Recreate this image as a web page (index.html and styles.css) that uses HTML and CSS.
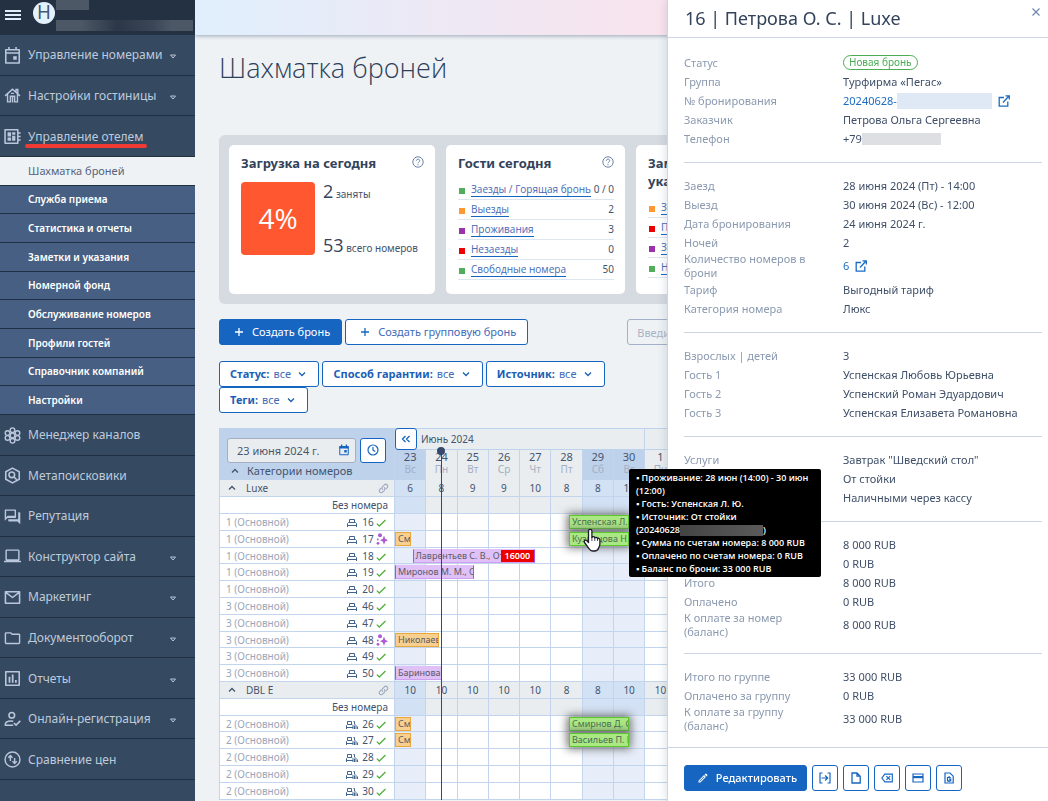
FILE: index.html
```html
<!DOCTYPE html>
<html lang="ru">
<head>
<meta charset="utf-8">
<title>Шахматка броней</title>
<link rel="stylesheet" href="styles.css">
</head>
<body>
<svg class="sprite" aria-hidden="true">
  <symbol id="i-calendar" viewBox="0 0 24 24"><path fill="none" stroke="currentColor" stroke-width="2" d="M3.500 5h17v16.500h-17z"/><path d="M3 4h18v5H3zM6 1h2.500v4H6zM15.500 1H18v4h-2.500zM12.500 12h5v5h-5z"/></symbol>
  <symbol id="i-cal-nav" viewBox="0 0 24 24"><path fill="none" stroke="currentColor" stroke-width="2.200" stroke-linejoin="round" d="M2.500 4h19v18.500h-19zM2.500 8.500h19M7 0v4M17 0v4"/><path d="M13 13h5v5h-5z"/></symbol>
  <symbol id="i-home" viewBox="0 0 24 24"><path fill="none" stroke="currentColor" stroke-width="2" d="M1.500 12.500 12 3l10.500 9.500M5 10v11h4v-8h6v8h4V10M17 7V3.500h2.500V9M12 14v8M10 9h4"/></symbol>
  <symbol id="i-board" viewBox="0 0 24 24"><path fill="none" stroke="currentColor" stroke-width="2.200" stroke-linejoin="round" d="M1.500 2.500h18v19h-18zM20 7h3.500M20 12h3.500M20 17h3.500"/><path d="M5 6h5v6H5zM11.500 6H16v3.500h-4.500zM5 13.500h5V18H5zM11.500 11H16v7h-4.500z"/></symbol>
  <symbol id="i-hive" viewBox="0 0 24 24"><g fill="none" stroke="currentColor" stroke-width="2"><circle cx="12" cy="12" r="3.300"/><circle cx="12" cy="4.500" r="3.300"/><circle cx="12" cy="19.500" r="3.300"/><circle cx="5" cy="8.500" r="3.300"/><circle cx="5" cy="15.500" r="3.300"/><circle cx="19" cy="8.500" r="3.300"/><circle cx="19" cy="15.500" r="3.300"/></g></symbol>
  <symbol id="i-hex" viewBox="0 0 24 24"><g fill="none" stroke="currentColor" stroke-width="2.200"><path d="m12 1.500 9.500 5.300v10.400L12 22.500l-9.500-5.300V6.800z"/><circle cx="11" cy="11" r="4"/><path d="m14 14 4 4"/></g></symbol>
  <symbol id="i-chat" viewBox="0 0 24 24"><path d="M15 4v7H5.170L3 13.170V4zm1-2H2a1 1 0 0 0-1 1v15l4-4h11a1 1 0 0 0 1-1V3a1 1 0 0 0-1-1zm6 4h-2v10H6v2a1 1 0 0 0 1 1h12l4 4V7a1 1 0 0 0-1-1z"/></symbol>
  <symbol id="i-laptop" viewBox="0 0 24 24"><path d="M21 18a2 2 0 0 0 1-2V4a2 2 0 0 0-2-2H4a2 2 0 0 0-2 2v12a2 2 0 0 0 1 2H0v2h24v-2zM4 4h16v12H4z"/></symbol>
  <symbol id="i-mail" viewBox="0 0 24 24"><path fill="none" stroke="currentColor" stroke-width="2.200" stroke-linejoin="round" d="M2 4h20v16H2zM2 4.500l10 7.500 10-7.500"/></symbol>
  <symbol id="i-folder" viewBox="0 0 24 24"><path d="m9.170 5 2 2H21v11H3V5zM10 3H3a2 2 0 0 0-2 2v13a2 2 0 0 0 2 2h18a2 2 0 0 0 2-2V7a2 2 0 0 0-2-2h-9z"/></symbol>
  <symbol id="i-chart" viewBox="0 0 24 24"><path fill="none" stroke="currentColor" stroke-width="2.200" stroke-linejoin="round" d="M2.500 2.500h19v19h-19z"/><path d="M6.500 9.500H9V18H6.500zM11 6.500h2.500V18H11zM15.500 14H18v4h-2.500z"/></symbol>
  <symbol id="i-userok" viewBox="0 0 24 24"><path fill="none" stroke="currentColor" stroke-width="2.200" d="M11 2a4 4 0 1 1 0 8 4 4 0 0 1 0-8zM13 20H2v-2.500c1-3 7-4 11-3M14 17l3 3 6-6"/></symbol>
  <symbol id="i-swap" viewBox="0 0 24 24"><g fill="none" stroke="currentColor" stroke-width="2"><circle cx="12" cy="12" r="10.500"/><path d="M9 14V6M6 9.500l3-3 3 3M15 10v8M12 14.500l3 3 3-3"/></g></symbol>
  <symbol id="i-caret" viewBox="0 0 8 6"><path fill="none" stroke="currentColor" d="M1.500 1h5L4 4z"/></symbol>
  <symbol id="i-help" viewBox="0 0 12 12"><g fill="none" stroke="currentColor"><circle cx="6" cy="6" r="5.200"/><path d="M4.300 4.800c0-2.300 3.500-2.100 3.400 0C7.700 6 6 6 6 7.300M6 8.200v1.100"/></g></symbol>
  <symbol id="i-plus" viewBox="0 0 10 10"><path fill="none" stroke="currentColor" stroke-width="1.300" d="M5 1v8M1 5h8"/></symbol>
  <symbol id="i-down" viewBox="0 0 8 6"><path fill="none" stroke="currentColor" stroke-width="1.300" d="m1 1.500 3 3 3-3"/></symbol>
  <symbol id="i-up" viewBox="0 0 8 6"><path fill="none" stroke="currentColor" stroke-width="1.300" d="m1 4.500 3-3 3 3"/></symbol>
  <symbol id="i-clock" viewBox="0 0 12 12"><g fill="none" stroke="currentColor" stroke-width="1.200"><circle cx="6" cy="6" r="5"/><path d="M6 3v3.200L8.300 7.500"/></g></symbol>
  <symbol id="i-dleft" viewBox="0 0 10 8"><path fill="none" stroke="currentColor" stroke-width="1.300" d="M4.500 1l-3 3 3 3M8.500 1l-3 3 3 3"/></symbol>
  <symbol id="i-link" viewBox="0 0 12 12"><g fill="none" stroke="currentColor" stroke-width="1.200" stroke-linecap="round"><path d="M5 7a2.200 2.200 0 0 1 0-3l2-2a2.100 2.100 0 0 1 3 3L8.700 6.300"/><path d="M7 5a2.200 2.200 0 0 1 0 3l-2 2a2.100 2.100 0 0 1-3-3l1.300-1.300"/></g></symbol>
  <symbol id="i-bed1" viewBox="0 0 12 9"><path fill="none" stroke="currentColor" d="M3.500 4V1.500h5V4M1.500 9V5.500l1-1h7l1 1V9M1.500 7.500h9"/></symbol>
  <symbol id="i-bed2" viewBox="0 0 12 9"><path fill="none" stroke="currentColor" d="M1.500 4V1.500h4V4M.5 9V5.500l1-1h4.500l1 1V9M.5 7.500H7M7.500 1.500h1V4l1.500 1.500V9M8.500 5.500V9M11.500 6.500V9"/></symbol>
  <symbol id="i-check" viewBox="0 0 10 8"><path fill="none" stroke="currentColor" stroke-width="1.300" d="m.8 4.600 2.500 2.400L9.500 1"/></symbol>
  <symbol id="i-clean" viewBox="0 0 12 12"><circle cx="4" cy="2.200" r="2"/><circle cx="1.800" cy="6.500" r=".9"/><circle cx="2" cy="10.300" r="1.400"/><path d="M8 2.500 9.200 5.800l2.800 1.400-2.800 1.400L8 11.800 6.800 8.600 4 7.200l2.800-1.400z"/></symbol>
  <symbol id="i-ext" viewBox="0 0 12 12"><path fill="none" stroke="currentColor" stroke-width="1.300" d="M6 2.500H1.200v8.700h8.600V6.500M7.500.8h3.800v3.800M11 1 5 7.500"/></symbol>
  <symbol id="i-close" viewBox="0 0 10 10"><path fill="none" stroke="currentColor" stroke-width="1.200" d="m1.500 1.500 7 7M8.500 1.500l-7 7"/></symbol>
  <symbol id="i-pen" viewBox="0 0 24 24"><path d="m14.060 9.020.92.920L5.920 19H5v-.92zM17.660 3a1 1 0 0 0-.7.290l-1.830 1.830 3.750 3.750 1.830-1.830a1 1 0 0 0 0-1.410L18.370 3.290a1 1 0 0 0-.71-.29zm-3.600 3.190L3 17.250V21h3.750L17.810 9.940z"/></symbol>
  <symbol id="i-checkin" viewBox="0 0 12 12"><path fill="none" stroke="currentColor" stroke-width="1.200" d="M3.500 1H1v10h2.500M8.500 1H11v10H8.500M2.500 6h6M6.200 3.500 8.700 6 6.200 8.500"/></symbol>
  <symbol id="i-doc" viewBox="0 0 12 12"><path fill="none" stroke="currentColor" stroke-width="1.300" d="M2 1h5l3.200 3.200V11H2zM7 1v3.200h3.200"/></symbol>
  <symbol id="i-erase" viewBox="0 0 14 12"><path fill="none" stroke="currentColor" stroke-width="1.300" d="M4.500 1.500h8.700v9H4.500L1 6zM6.300 3.700l4.400 4.600M10.700 3.700 6.300 8.300"/></symbol>
  <symbol id="i-card" viewBox="0 0 12 12"><path fill="none" stroke="currentColor" stroke-width="1.200" d="M1 2h10v8H1z"/><path d="M1 4h10v2.200H1z"/></symbol>
  <symbol id="i-docmoney" viewBox="0 0 12 12"><path fill="none" stroke="currentColor" stroke-width="1.200" d="M2 1h5l3.200 3.200V11H2zM7.800 5.500H4.500v3.300h3.200V7.200H6M6.100 4v1M6.100 9v1"/></symbol>
</svg>

<div class="app">
  <nav class="side">
    <div class="side-head">
      <button class="burger" aria-label="Меню"></button>
      <span class="logo">H</span>
      <span class="masks"><i class="mask-a"></i><i class="mask-b"></i></span>
    </div>
    <div class="nav-top">
      <a href="#" class="nav"><svg><use href="#i-cal-nav"/></svg><span>Управление номерами</span><svg class="caret"><use href="#i-caret"/></svg></a>
      <a href="#" class="nav"><svg><use href="#i-home"/></svg><span>Настройки гостиницы</span><svg class="caret"><use href="#i-caret"/></svg></a>
      <a href="#" class="nav"><svg><use href="#i-board"/></svg><span class="marked">Управление отелем</span></a>
    </div>
    <div class="nav-sub">
      <a href="#" class="sub current">Шахматка броней</a>
      <a href="#" class="sub">Служба приема</a>
      <a href="#" class="sub">Статистика и отчеты</a>
      <a href="#" class="sub">Заметки и указания</a>
      <a href="#" class="sub">Номерной фонд</a>
      <a href="#" class="sub">Обслуживание номеров</a>
      <a href="#" class="sub">Профили гостей</a>
      <a href="#" class="sub">Справочник компаний</a>
      <a href="#" class="sub">Настройки</a>
    </div>
    <div class="nav-rest">
      <a href="#" class="nav"><svg><use href="#i-hive"/></svg><span>Менеджер каналов</span></a>
      <a href="#" class="nav"><svg><use href="#i-hex"/></svg><span>Метапоисковики</span></a>
      <a href="#" class="nav"><svg><use href="#i-chat"/></svg><span>Репутация</span></a>
      <a href="#" class="nav"><svg><use href="#i-laptop"/></svg><span>Конструктор сайта</span><svg class="caret"><use href="#i-caret"/></svg></a>
      <a href="#" class="nav"><svg><use href="#i-mail"/></svg><span>Маркетинг</span><svg class="caret"><use href="#i-caret"/></svg></a>
      <a href="#" class="nav"><svg><use href="#i-folder"/></svg><span>Документооборот</span><svg class="caret"><use href="#i-caret"/></svg></a>
      <a href="#" class="nav"><svg><use href="#i-chart"/></svg><span>Отчеты</span><svg class="caret"><use href="#i-caret"/></svg></a>
      <a href="#" class="nav"><svg><use href="#i-userok"/></svg><span>Онлайн-регистрация</span><svg class="caret"><use href="#i-caret"/></svg></a>
      <a href="#" class="nav"><svg><use href="#i-swap"/></svg><span>Сравнение цен</span></a>
    </div>
  </nav>

  <main class="main">
    <div class="topbar"></div>
    <div class="content">
      <h1>Шахматка броней</h1>
      <section class="stats">
        <article class="card load">
          <header><h2>Загрузка на сегодня</h2><svg class="help"><use href="#i-help"/></svg></header>
          <div class="load-body">
            <div class="percent">4%</div>
            <div class="load-nums">
              <p><b>2</b> заняты</p>
              <p><b>53</b> всего номеров</p>
            </div>
          </div>
        </article>
        <article class="card guests">
          <header><h2>Гости сегодня</h2><svg class="help"><use href="#i-help"/></svg></header>
          <ul>
            <li><i class="green"></i><a href="#">Заезды / Горящая бронь</a><span>0 / 0</span></li>
            <li><i class="orange"></i><a href="#">Выезды</a><span>2</span></li>
            <li><i class="purple"></i><a href="#">Проживания</a><span>3</span></li>
            <li><i class="red"></i><a href="#">Незаезды</a><span>0</span></li>
            <li><i class="green"></i><a href="#">Свободные номера</a><span>50</span></li>
          </ul>
        </article>
        <article class="card notes">
          <header><h2>Заметки и указания</h2></header>
          <ul>
            <li><i class="orange"></i><a href="#">Заезды</a></li>
            <li><i class="red"></i><a href="#">Проживания</a></li>
            <li><i class="purple"></i><a href="#">Задачи</a></li>
            <li><i class="green"></i><a href="#">Номера</a></li>
          </ul>
        </article>
      </section>

      <div class="actions">
        <button class="btn primary"><svg><use href="#i-plus"/></svg>Создать бронь</button>
        <button class="btn"><svg><use href="#i-plus"/></svg>Создать групповую бронь</button>
        <input class="search" type="text" placeholder="Введите имя гостя" aria-label="Поиск брони">
      </div>
      <div class="filters">
        <label class="filter"><b>Статус:</b><select><option>все</option></select><svg><use href="#i-down"/></svg></label>
        <label class="filter"><b>Способ гарантии:</b><select><option>все</option></select><svg><use href="#i-down"/></svg></label>
        <label class="filter"><b>Источник:</b><select><option>все</option></select><svg><use href="#i-down"/></svg></label>
        <label class="filter"><b>Теги:</b><select><option>все</option></select><svg><use href="#i-down"/></svg></label>
      </div>

      <div class="board">
        <table class="grid">
          <colgroup><col class="c-room"></colgroup>
          <thead>
            <tr class="r-month">
              <th rowspan="2" class="corner">
                <div class="corner-box">
                  <div class="picker">
                    <label class="date"><input type="text" value="23 июня 2024 г." aria-label="Дата"><svg><use href="#i-calendar"/></svg></label>
                    <button class="now" aria-label="Сегодня"><svg><use href="#i-clock"/></svg></button>
                  </div>
                  <div class="cats"><svg><use href="#i-up"/></svg>Категории номеров</div>
                </div>
              </th>
              <th colspan="8" class="month"><div><button class="back" aria-label="Назад"><svg><use href="#i-dleft"/></svg></button>Июнь 2024</div></th>
              <th colspan="13"></th>
            </tr>
            <tr class="r-days"></tr>
          </thead>
          <tbody></tbody>
        </table>
        <div class="today"></div>
      </div>
    </div>
  </main>
</div>

<aside class="drawer">
  <header class="d-head">
    <h2>16 | Петрова О. С. | Luxe</h2>
    <button class="close" aria-label="Закрыть"><svg><use href="#i-close"/></svg></button>
  </header>
  <div class="d-body">
    <dl>
      <div><dt>Статус</dt><dd><span class="pill">Новая бронь</span></dd></div>
      <div><dt>Группа</dt><dd>Турфирма «Пегас»</dd></div>
      <div><dt>№ бронирования</dt><dd><a href="#">20240628-</a><i class="hide-blue"></i><svg class="ext"><use href="#i-ext"/></svg></dd></div>
      <div><dt>Заказчик</dt><dd>Петрова Ольга Сергеевна</dd></div>
      <div><dt>Телефон</dt><dd>+79<i class="hide-grey"></i></dd></div>
    </dl>
    <dl>
      <div><dt>Заезд</dt><dd>28 июня 2024 (Пт) - 14:00</dd></div>
      <div><dt>Выезд</dt><dd>30 июня 2024 (Вс) - 12:00</dd></div>
      <div><dt>Дата бронирования</dt><dd>24 июня 2024 г.</dd></div>
      <div><dt>Ночей</dt><dd>2</dd></div>
      <div><dt>Количество номеров в брони</dt><dd><a href="#">6</a><svg class="ext"><use href="#i-ext"/></svg></dd></div>
      <div><dt>Тариф</dt><dd>Выгодный тариф</dd></div>
      <div><dt>Категория номера</dt><dd>Люкс</dd></div>
    </dl>
    <dl>
      <div><dt>Взрослых | детей</dt><dd>3</dd></div>
      <div><dt>Гость 1</dt><dd>Успенская Любовь Юрьевна</dd></div>
      <div><dt>Гость 2</dt><dd>Успенский Роман Эдуардович</dd></div>
      <div><dt>Гость 3</dt><dd>Успенская Елизавета Романовна</dd></div>
    </dl>
    <dl>
      <div><dt>Услуги</dt><dd>Завтрак "Шведский стол"</dd></div>
      <div><dt></dt><dd>От стойки</dd></div>
      <div><dt></dt><dd>Наличными через кассу</dd></div>
    </dl>
    <dl>
      <div><dt></dt><dd>8 000 RUB</dd></div>
      <div><dt></dt><dd>0 RUB</dd></div>
      <div><dt>Итого</dt><dd>8 000 RUB</dd></div>
      <div><dt>Оплачено</dt><dd>0 RUB</dd></div>
      <div><dt>К оплате за номер (баланс)</dt><dd>8 000 RUB</dd></div>
    </dl>
    <dl>
      <div><dt>Итого по группе</dt><dd>33 000 RUB</dd></div>
      <div><dt>Оплачено за группу</dt><dd>0 RUB</dd></div>
      <div><dt>К оплате за группу (баланс)</dt><dd>33 000 RUB</dd></div>
    </dl>
  </div>
  <footer class="d-foot">
    <button class="btn primary edit"><svg><use href="#i-pen"/></svg>Редактировать</button>
    <button class="sq" aria-label="Заселить"><svg><use href="#i-checkin"/></svg></button>
    <button class="sq" aria-label="Документ"><svg><use href="#i-doc"/></svg></button>
    <button class="sq" aria-label="Отменить"><svg><use href="#i-erase"/></svg></button>
    <button class="sq" aria-label="Оплата"><svg><use href="#i-card"/></svg></button>
    <button class="sq" aria-label="Счет"><svg><use href="#i-docmoney"/></svg></button>
  </footer>
</aside>

<div class="tip" role="tooltip">▪ Проживание: 28 июн (14:00) - 30 июн (12:00)<br>▪ Гость: Успенская Л. Ю.<br>▪ Источник: От стойки<br>(20240628<i></i>)<br>▪ Сумма по счетам номера: 8 000 RUB<br>▪ Оплачено по счетам номера: 0 RUB<br>▪ Баланс по брони: 33 000 RUB</div>
<svg class="hand" viewBox="0 0 18 24"><path fill="#fff" stroke="#1c1c28" stroke-width="1.300" stroke-linejoin="round" d="M5.500 14.500V3a1.700 1.700 0 0 1 3.400 0v6.500c.5-1.300 2.700-1 2.900.4.700-1 2.500-.6 2.700.7.900-.5 2.400-.1 2.400 1.400V16c0 2-1 3.200-1.400 4.300-.6 1.800-2.200 2.700-4 2.700H9.800c-1.800 0-2.800-.8-3.600-2.200L1.500 14.500c-1-1.900 1.200-3.200 2.500-1.700z"/><path stroke="#1c1c28" stroke-width=".8" d="M8.900 9.500V13M11.800 10v3M14.500 10.700V13"/></svg>
<script src="script.js"></script>
</body>
</html>
```

FILE: styles.css
```css
* { box-sizing: border-box; }
body { margin: 0; background: #eef2f5; color: #44546c; font: 11px/14px "Noto Sans", "Open Sans", sans-serif; overflow-x: hidden; }
h1, h2, p, ul, dl, dd { margin: 0; padding: 0; font-weight: 400; }
ul { list-style: none; }
a { text-decoration: none; color: #1b6cc4; }
button, input, select { font: inherit; color: inherit; margin: 0; }
button { cursor: pointer; padding: 0; }
svg { fill: currentColor; flex: none; }
.sprite { display: none; }
.app { display: flex; min-height: 100vh; }

/* sidebar */
.side { flex: 0 0 195px; min-width: 0; background: #354961; }
.side-head { display: flex; height: 35px; background: #243142; padding-left: 5px; align-items: flex-start; }
.burger { width: 16px; height: 11px; margin-top: 10px; background: linear-gradient(#dfeefb 2px, transparent 2px 4px, #dfeefb 4px 6px, transparent 6px 8px, #dfeefb 8px 10px, transparent 10px); border: 0; }
.logo { width: 22px; height: 22px; margin: 2px 1px 0 12px; border-radius: 50%; background: #e3f1fd; color: #46566c; font: 18px/22px Inter, sans-serif; text-align: center; }
.masks { flex: 1; display: flex; flex-direction: column; gap: 10px; padding-right: 2px; }
.mask-a { width: 33px; height: 10px; background: #4d5866; }
.mask-b { height: 11px; background: linear-gradient(90deg, #4d5866 0 18%, #2c3848 45%, #3a4656 70%, #4d5866 85%); }
.nav-top, .nav-sub, .nav-rest { display: grid; grid-auto-rows: 1fr; }
.nav-top { height: 122px; }
.nav-sub { height: 258px; background: #475f82; }
.nav-rest { height: 365px; }
.nav { display: flex; align-items: center; gap: 7px; min-width: 0; padding: 1px 18px 0 4px; border-bottom: 1px solid #212f42; color: #bfcbdc; font: 12px/18px "Noto Sans", "Open Sans", sans-serif; }
.nav span { flex: 1; white-space: nowrap; }
.nav svg { width: 17px; height: 17px; color: #b9c6db; }
.nav .caret { width: 8px; height: 6px; margin-top: 4px; }
.marked { position: relative; }
.marked::after { content: ""; position: absolute; left: -3px; top: 16px; width: 122px; height: 4px; border-radius: 2px; background: #f23a35; }
.sub { display: flex; align-items: center; padding-left: 28px; border-bottom: 1px solid #212f42; color: #fff; font: 600 10px/14px "Noto Sans", sans-serif; }
.sub.current { background: #eef2f5; color: #56647a; font-weight: 400; font-size: 11px; }

/* page */
.main { flex: 1; min-width: 0; overflow: hidden; }
.topbar { height: 35px; background: linear-gradient(90deg, #e0effd, #fbe2ec 60%, #fbe2ec); box-shadow: 0 1px 4px #9aa5b4; }
.content { padding-left: 24px; }
h1 { font: 300 27px/36px "Open Sans", sans-serif; color: #2f405a; margin: 15px 0 49px; }
.stats { display: flex; gap: 11px; padding: 10px; border-radius: 6px 0 0 6px; background: #d6dae1; }
.card { background: #fff; border-radius: 5px; min-height: 149px; padding: 9px 11px 9px 12px; flex: none; }
.card header { display: flex; justify-content: space-between; }
.card h2 { font: 700 13px/18px "Noto Sans", sans-serif; color: #33435b; }
.help { width: 12px; height: 12px; margin-top: 2px; color: #6d84aa; }
.load { width: 206px; }
.guests { width: 179px; }
.notes { width: 179px; }
.notes h2 { max-width: 90px; }
.load-body { display: flex; gap: 8px; margin-top: 10px; }
.percent { flex: none; width: 74px; height: 73px; border-radius: 4px; background: #ff5830; color: #fff; font: 28px/73px "Open Sans", sans-serif; text-align: center; }
.load-nums { display: flex; flex-direction: column; justify-content: space-between; white-space: nowrap; font-size: 10px; }
.load-nums b { font: 400 18px/18px "Open Sans", sans-serif; color: #33435b; }
.card ul { margin-top: 8px; }
.card li { display: flex; align-items: center; height: 20px; border-bottom: 1px solid #dde6ef; font-size: 10px; line-height: 13px; white-space: nowrap; }
.card li i { width: 6px; height: 6px; margin: 2px 6px 0 1px; }
.card li a { color: #4468b6; border-bottom: 1px solid #1665c1; font-family: "Open Sans", sans-serif; }
.card li span { margin-left: auto; }
.green { background: #52ae5b; } .orange { background: #ff9830; } .purple { background: #9c31ad; } .red { background: #ec0000; }
.actions { display: flex; gap: 3px; margin-top: 15px; }
.btn { display: flex; align-items: center; justify-content: center; height: 26px; padding: 0 11px 0 14px; gap: 8px; border: 1px solid #1665c1; border-radius: 3px; background: #fff; color: #3f6bb8; font: 11px/16px "Noto Sans", sans-serif; white-space: nowrap; }
.btn svg { width: 10px; height: 10px; color: #1665c1; }
.btn.primary { background: #1665c1; color: #fff; }
.btn.primary svg { color: #fff; }
.search { width: 200px; height: 26px; margin-left: 96px; padding: 0 9px; border: 1px solid #a3b1c7; border-radius: 3px; background: transparent; }
.search::placeholder { color: #a9b4c4; }
.filters { display: flex; flex-wrap: wrap; gap: 0 3px; max-width: 400px; margin-top: 16px; }
.filter { display: flex; align-items: center; height: 26px; padding: 0 12px 0 10px; border: 1px solid #1665c1; border-radius: 3px; background: #fff; color: #1c5fb4; font: 11px/16px "Noto Sans", sans-serif; }
.filter select { appearance: none; border: 0; background: none; padding: 0 7px 0 4px; color: #3f6bb8; }
.filter svg { width: 8px; height: 6px; }

/* booking board */
.board { position: relative; margin: 15px -4px 0 0; }
.grid { width: 100%; table-layout: fixed; border-collapse: separate; border-spacing: 0; }
.c-room { width: 176px; }
.grid th, .grid td { padding: 0; font-weight: 400; text-align: center; border-right: 1px solid #c3d5ec; border-bottom: 1px solid #c3d5ec; background: #fff; position: relative; line-height: 15px; }
.grid thead th { background: #e9edf0; border-top: 1px solid #bdd2ec; border-bottom: 0; }
.r-month { height: 21px; }
.r-days { height: 31px; }
.grid .r-days th { line-height: 13px; vertical-align: top; }
.grid .r-days small { display: block; font-size: 10px; color: #a3b0c3; }
.grid thead th.corner, .grid thead th.off { background: #bed2ec; }
.corner-box { display: flex; flex-direction: column; padding: 7px 8px 0; text-align: left; }
.picker { display: flex; gap: 4px; }
.date { flex: 1; min-width: 0; display: flex; align-items: center; height: 25px; padding: 0 5px 0 9px; border: 1px solid #a5aec2; border-radius: 3px; background: #e9edf0; color: #1665c1; }
.date input { flex: 1; min-width: 0; width: 80px; border: 0; padding: 0; background: none; font-size: 11px; color: #4b586c; outline: 0; }
.date svg { width: 12px; height: 12px; }
.now, .back, .sq { display: flex; flex: none; align-items: center; justify-content: center; width: 26px; height: 26px; border: 1px solid #1665c1; border-radius: 3px; background: #fff; color: #1665c1; }
.now { height: 25px; }
.now svg { width: 12px; height: 12px; }
.cats { display: flex; align-items: center; gap: 8px; padding-left: 4px; font-size: 11px; line-height: 16px; color: #44546c; }
.cats svg, .cat svg:first-child { width: 8px; height: 6px; }
.month div { display: flex; align-items: center; gap: 4px; height: 20px; font-size: 10px; }
.back { width: 22px; height: 22px; position: relative; z-index: 3; }
.back svg { width: 10px; height: 8px; }
tbody tr { height: 17px; }
tbody tr:nth-child(5n) { height: 16px; }
.grid tbody td { font-size: 10px; }
.grid tbody tr:nth-child(5n) > * { line-height: 14px; }
.grid tbody td.off { background: #e7eef9; }
.grid .sum td, .grid .free td, .grid .sum th { background: #e9edf0; }
.grid .sum td.off, .grid .free td.off { background: #d3e1f4; }
.grid tbody th { border-left: 1px solid #c3d5ec; font-size: 10px; }
.cat, .room { display: flex; align-items: center; }
.cat { gap: 10px; padding: 0 5px 0 8px; }
.cat svg:last-child { width: 11px; height: 11px; margin-left: auto; color: #9ba8bb; }
.none { text-align: right; padding-right: 6px; }
.room { padding: 0 8px 0 6px; color: #9ba7b9; }
.room b { font-weight: 400; color: #44546c; width: 16px; }
.room .bed { width: 12px; height: 9px; margin: 1px 2px 0 auto; color: #41658a; }
.room .ok { width: 10px; height: 8px; margin-top: 2px; color: #55ae3f; }
.room .clean { width: 12px; height: 12px; margin-right: -2px; color: #ae5bd6; }
.bar { position: absolute; top: 1px; z-index: 2; height: 14px; padding-left: 2px; overflow: hidden; white-space: nowrap; text-align: left; font: 9px/12px "Noto Sans", sans-serif; color: #5b5a66; border: 1px solid; }
.bar.amber { background: #f7cf8e; border-color: #e9a83e; }
.bar.violet { background: #dfc0f7; border-color: #dfc0f7; border-left-color: #a94fe4; border-right-color: #a94fe4; border-bottom-color: #cf9ff2; }
.bar.lime { background: #a9e883; border-color: #5cc62f; box-shadow: 0 0 8px 2px #666d; color: #4d6b52; }
.bar em { position: absolute; right: 0; top: 0; bottom: 0; padding: 0 4px; background: #ec0000; color: #fff; font: 600 9px/12px "Noto Sans", sans-serif; }
.today { position: absolute; z-index: 3; top: 19px; bottom: 0; width: 1px; left: 222px; background: #34496b; }
.today::before { content: ""; position: absolute; left: -4px; top: 0; width: 8px; height: 8px; border-radius: 50%; background: #34496b; }

/* booking drawer */
.drawer { position: fixed; z-index: 5; right: 0; top: 0; bottom: 0; width: 381px; background: #fff; border-left: 1px solid #cbd5e4; box-shadow: -2px 0 8px #6472882e; }
.d-head { display: flex; justify-content: space-between; height: 38px; padding: 0 7px 0 17px; border-bottom: 1px solid #cbd5e4; }
.d-head h2 { font: 18px/36px "Noto Sans", sans-serif; color: #33435b; }
.close { display: flex; width: 10px; height: 10px; margin-top: 7px; border: 0; background: none; color: #7188ad; }
.close svg { width: 10px; height: 10px; }
.d-body { padding-top: 2px; }
.d-body dl { margin: 0 6px 0 16px; padding: 13px 0 14px; border-bottom: 1px solid #cbd5e4; }
.d-body dl:last-child { margin-left: 0; margin-right: 0; padding-left: 16px; }
.d-body dl > div { display: grid; grid-template-columns: 135px 1fr; column-gap: 24px; align-items: center; min-height: 19px; }
.d-body dt { color: #8b9ab0; }
.d-body dd { display: flex; align-items: center; color: #3f4f68; }
.pill { height: 15px; padding: 0 5px; border: 1px solid #4bac55; border-radius: 8px; color: #4bac55; font: 10px/13px "Noto Sans", sans-serif; }
.hide-blue { width: 95px; height: 16px; background: #dfe9f5; }
.hide-grey { width: 79px; height: 12px; background: #dddfe3; }
.ext { width: 12px; height: 12px; margin-left: 6px; color: #1b6cc4; }
.d-foot { display: flex; gap: 5px; padding: 17px 16px; }
.d-foot .edit { width: 123px; gap: 7px; font-weight: 500; }
.d-foot .edit svg { width: 12px; height: 12px; }
.sq svg { width: 12px; height: 12px; }

.tip { position: fixed; z-index: 6; left: 629px; top: 469px; width: 192px; padding: 2px 2px 2px 7px; border-radius: 2px; background: #000; color: #fff; font: 600 9px/13px "Open Sans", sans-serif; }
.tip i { display: inline-block; width: 83px; height: 11px; vertical-align: middle; background: linear-gradient(90deg, #444, #5a5a5a); }
.hand { position: fixed; z-index: 7; left: 583px; top: 528px; width: 18px; height: 24px; }
```

FILE: script.js
```js
const DAYS = 21;
const WEEK = ["Вс", "Пн", "Вт", "Ср", "Чт", "Пт", "Сб"];
const isOff = (d) => d % 7 === 0 || d % 7 === 6;
const off = (d) => (isOff(d) ? ' class="off"' : "");
const days = Array.from({ length: DAYS }, (_, d) => d);

// Bars: start and end are measured in days from 23 June.
const CATEGORIES = [
  {
    name: "Luxe", bed: "i-bed1",
    free: [6, 8, 9, 9, 10, 8, 8, 10],
    rooms: [
      { floor: 1, no: 16, bars: [["lime", 5.58, 7.5, "Успенская Л."]] },
      { floor: 1, no: 17, clean: true, bars: [["amber", 0, 0.5, "См"], ["lime", 5.58, 7.5, "Кузнецова Н."]] },
      { floor: 1, no: 18, bars: [["violet", 0.58, 4.5, "Лаврентьев С. В., От", "16000"]] },
      { floor: 1, no: 19, bars: [["violet", 0, 2.5, "Миронов М. М., О"]] },
      { floor: 1, no: 20 },
      { floor: 3, no: 46 },
      { floor: 3, no: 47 },
      { floor: 3, no: 48, clean: true, bars: [["amber", 0, 1.4, "Николаев"]] },
      { floor: 3, no: 49 },
      { floor: 3, no: 50, bars: [["violet", 0, 1.5, "Баринова"]] }
    ]
  },
  {
    name: "DBL E", bed: "i-bed2",
    free: [10, 10, 10, 10, 10, 8, 8, 10, 10],
    rooms: [
      { floor: 2, no: 26, bars: [["amber", 0, 0.5, "См"], ["lime", 5.58, 7.5, "Смирнов Д. С"]] },
      { floor: 2, no: 27, bars: [["amber", 0, 0.5, "См"], ["lime", 5.58, 7.5, "Васильев П. И"]] },
      { floor: 2, no: 28 },
      { floor: 2, no: 29 },
      { floor: 2, no: 30 }
    ]
  }
];

document.querySelector(".r-days").innerHTML = days.map((d) =>
  `<th${off(d)}>${d < 8 ? 23 + d : d < 9 ? d - 7 : ""}<small>${d < 9 ? WEEK[d % 7] : ""}</small></th>`).join("");

// Percentages refer to a cell without its 1px border, so each day adds that pixel back.
function bar([kind, from, to, text, debt]) {
  const left = (from - Math.floor(from)) * 100;
  const span = to - from;
  const width = `calc(${span * 100}% + ${Math.ceil(span)}px)`;
  return `<div class="bar ${kind}" style="left:${left}%;width:${width}">${text}${debt ? `<em>${debt}</em>` : ""}</div>`;
}

function roomRow(room, bed) {
  const bars = room.bars || [];
  const mark = room.clean
    ? '<svg class="clean"><use href="#i-clean"/></svg>'
    : '<svg class="ok"><use href="#i-check"/></svg>';
  const cells = days.map((d) =>
    `<td${off(d)}>${bars.filter((b) => Math.floor(b[1]) === d).map(bar).join("")}</td>`).join("");
  return `<tr><th><div class="room">${room.floor} (Основной)<svg class="bed"><use href="#${bed}"/></svg><b>${room.no}</b>${mark}</div></th>${cells}</tr>`;
}

document.querySelector(".grid tbody").innerHTML = CATEGORIES.map((c) =>
  `<tr class="sum"><th><div class="cat"><svg><use href="#i-up"/></svg>${c.name}<svg><use href="#i-link"/></svg></div></th>` +
  days.map((d) => `<td${off(d)}>${c.free[d] ?? ""}</td>`).join("") + "</tr>" +
  `<tr class="free"><th><div class="none">Без номера</div></th>` +
  days.map((d) => `<td${off(d)}></td>`).join("") + "</tr>" +
  c.rooms.map((r) => roomRow(r, c.bed)).join("")).join("");
```
